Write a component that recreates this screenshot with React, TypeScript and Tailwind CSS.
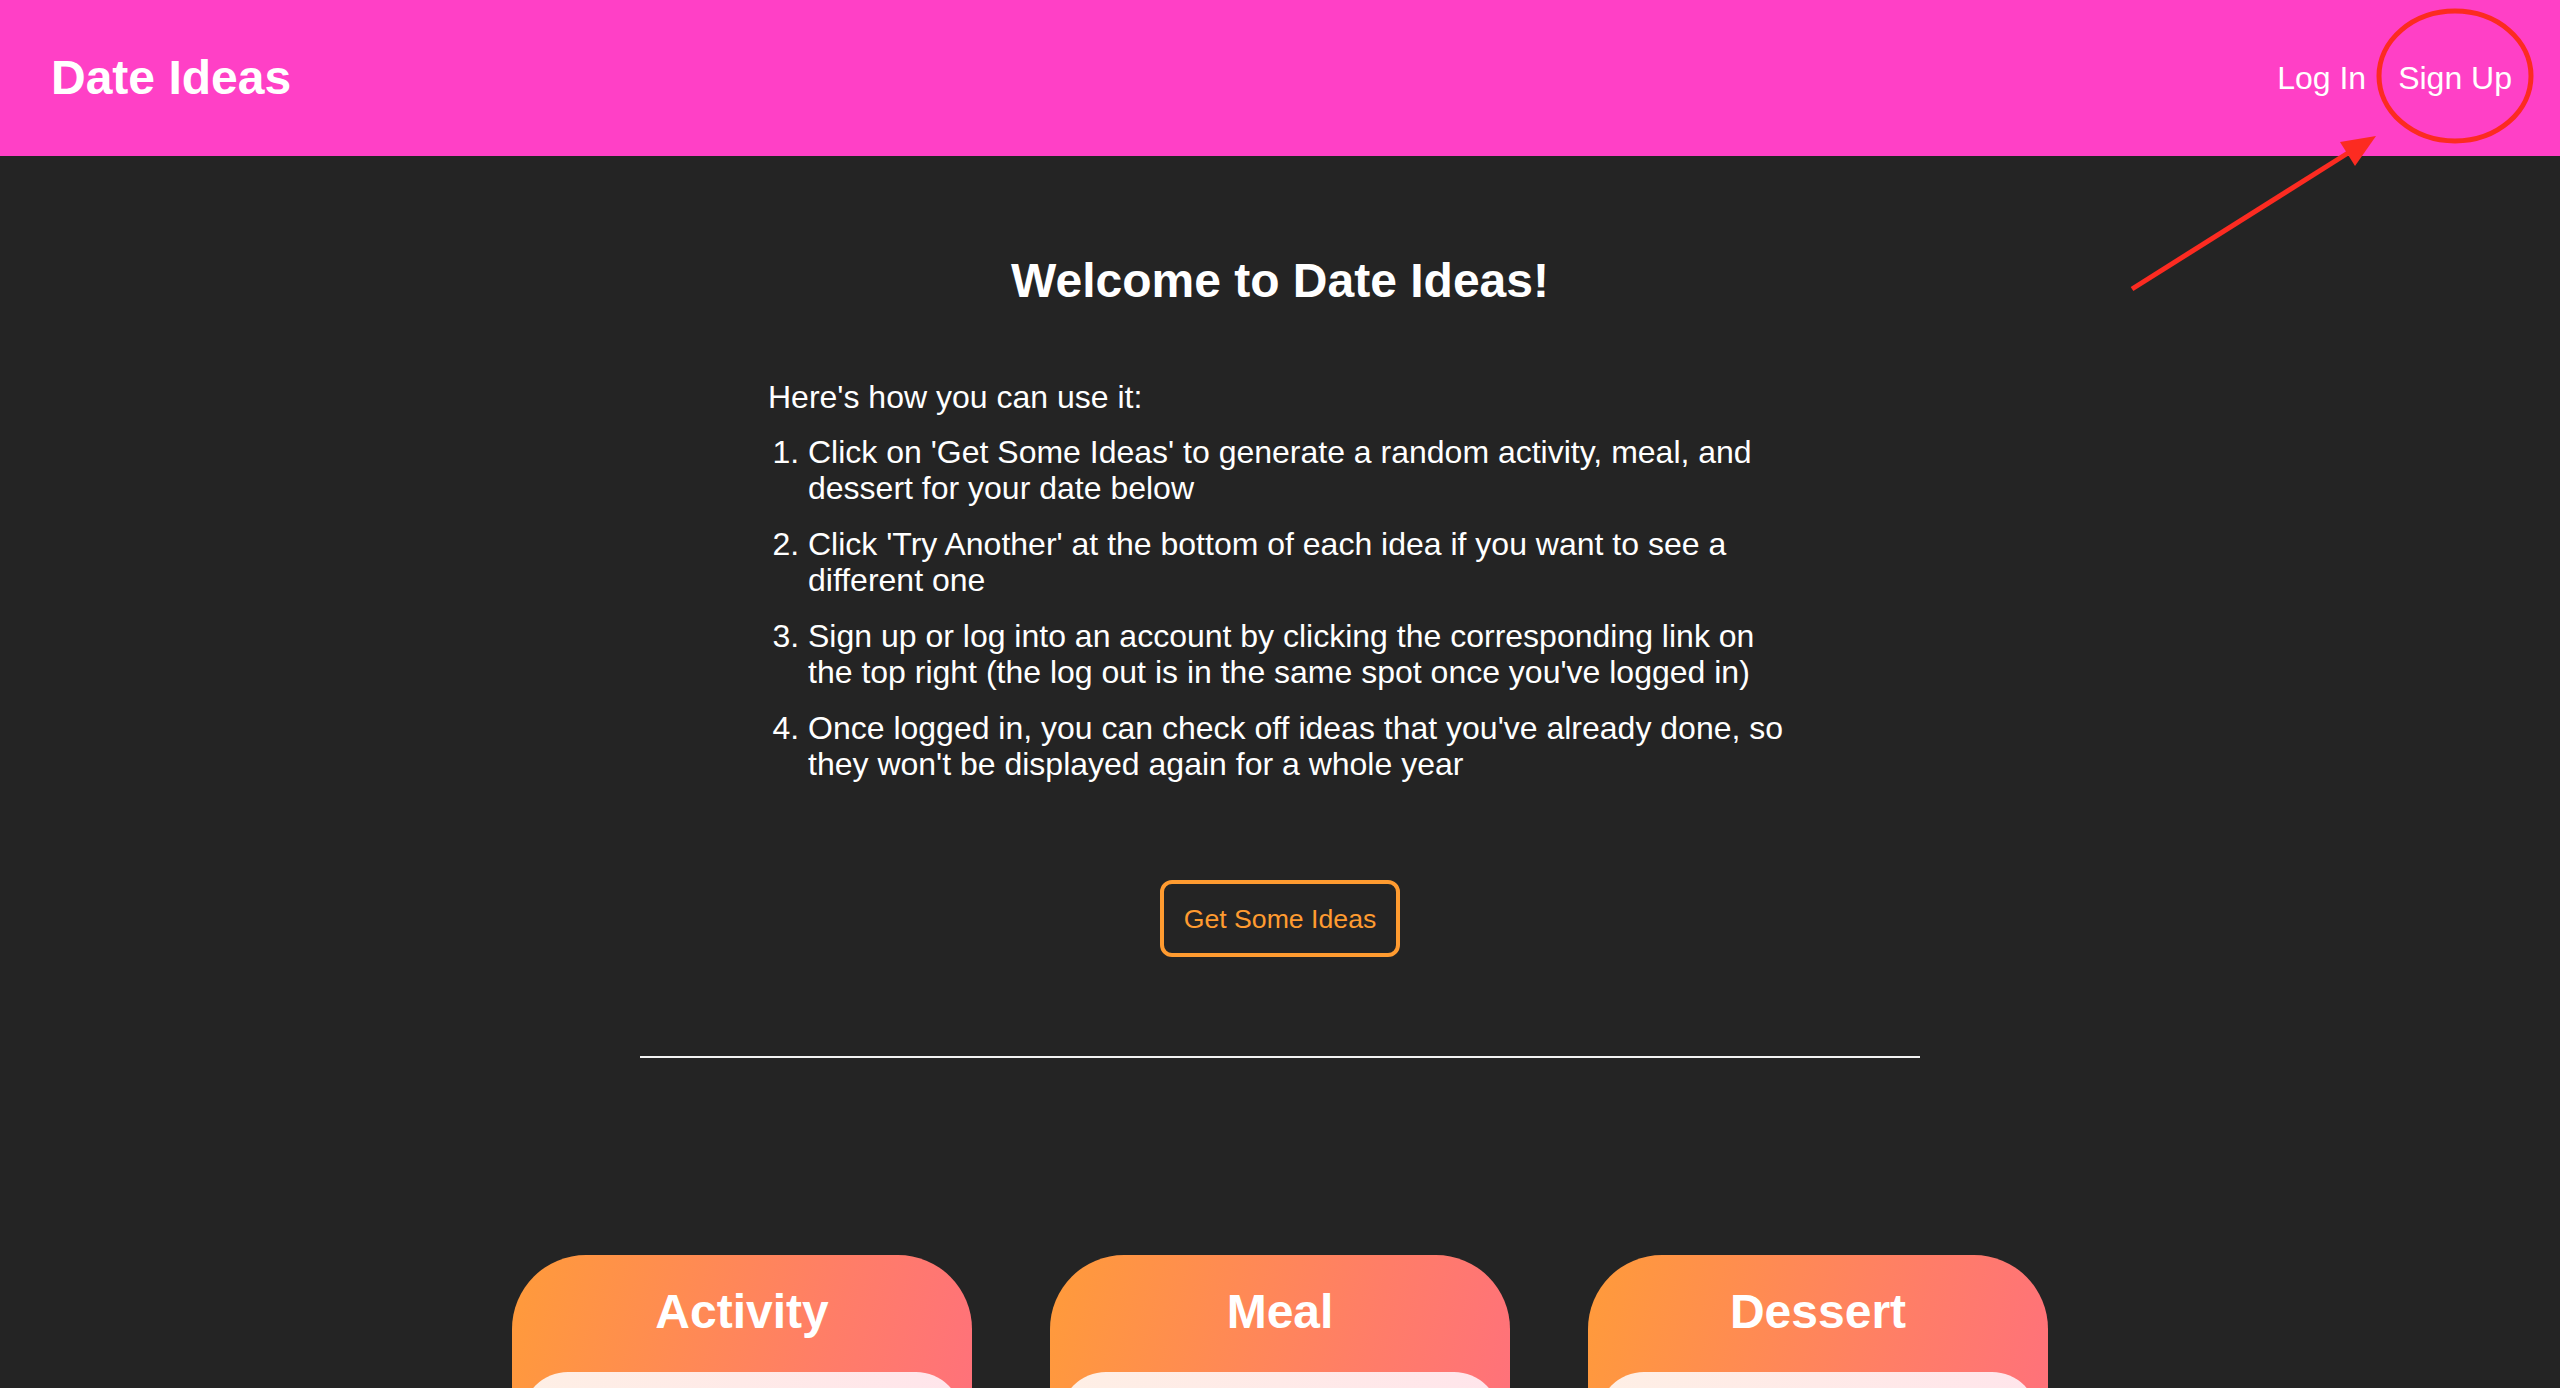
import React from 'react';

const steps = [
    "Click on 'Get Some Ideas' to generate a random activity, meal, and dessert for your date below",
    "Click 'Try Another' at the bottom of each idea if you want to see a different one",
    "Sign up or log into an account by clicking the corresponding link on the top right (the log out is in the same spot once you've logged in)",
    "Once logged in, you can check off ideas that you've already done, so they won't be displayed again for a whole year",
];

const categories = ['Activity', 'Meal', 'Dessert'];

const Header: React.FC = () => (
    <header className="h-[156px] bg-[#ff40c6] px-8 flex items-center justify-between">
        <h1 className="pl-[19px] text-[48px] font-bold text-white leading-none">Date Ideas</h1>
        <nav className="flex items-center">
            <a href="#" className="px-4 text-[32px] text-white">Log In</a>
            <a href="#" className="px-4 text-[32px] text-white">Sign Up</a>
        </nav>
    </header>
);

const IdeaCard: React.FC<{ title: string }> = ({ title }) => (
    <div className="w-[460px] h-[620px] rounded-[74px] bg-[linear-gradient(105deg,#ff9b3a_0%,#ff7d68_55%,#ff6889_100%)] px-[10px] pt-[29px]">
        <h3 className="text-center text-[48px] font-bold leading-[55px] text-white">{title}</h3>
        <div className="mt-[33px] h-[480px] rounded-[46px] bg-gradient-to-r from-[#feefe5] to-[#ffe5eb]" />
    </div>
);

export default function App() {
    return (
        <div className="relative min-h-screen bg-[#242424] font-['Liberation_Sans',Arial,sans-serif] text-white">
            <Header />

            <main className="flex flex-col items-center pt-[97px] pb-20">
                <h2 className="text-[48px] font-bold leading-[56px]">Welcome to Date Ideas!</h2>

                <div className="w-[1024px] mt-[70px] text-[32px] leading-[36px]">
                    <p className="mb-[19px]">Here's how you can use it:</p>
                    <ol className="list-decimal pl-10 space-y-5">
                        {steps.map((step) => (
                            <li key={step}>{step}</li>
                        ))}
                    </ol>
                </div>

                <button className="mt-[98px] h-[77px] px-5 rounded-[12px] border-4 border-[#ff9b30] text-[26.67px] text-[#ff9b30]">
                    Get Some Ideas
                </button>

                <hr className="mt-[99px] w-[1280px] border-0 h-[2px] bg-[#f2f2f2]" />

                <div className="mt-[197px] flex gap-[78px]">
                    {categories.map((c) => (
                        <IdeaCard key={c} title={c} />
                    ))}
                </div>
            </main>

            {/* annotation: circle + arrow pointing at Sign Up */}
            <svg className="absolute left-[2100px] top-0 pointer-events-none" width="460" height="320" viewBox="0 0 460 320">
                <ellipse cx="355" cy="76" rx="76" ry="65" fill="none" stroke="#fc2b21" strokeWidth="5" />
                <line x1="32" y1="289" x2="248" y2="153" stroke="#fc2b21" strokeWidth="5" />
                <polygon points="276,136 240,142 255,166" fill="#fc2b21" />
            </svg>
        </div>
    );
}
